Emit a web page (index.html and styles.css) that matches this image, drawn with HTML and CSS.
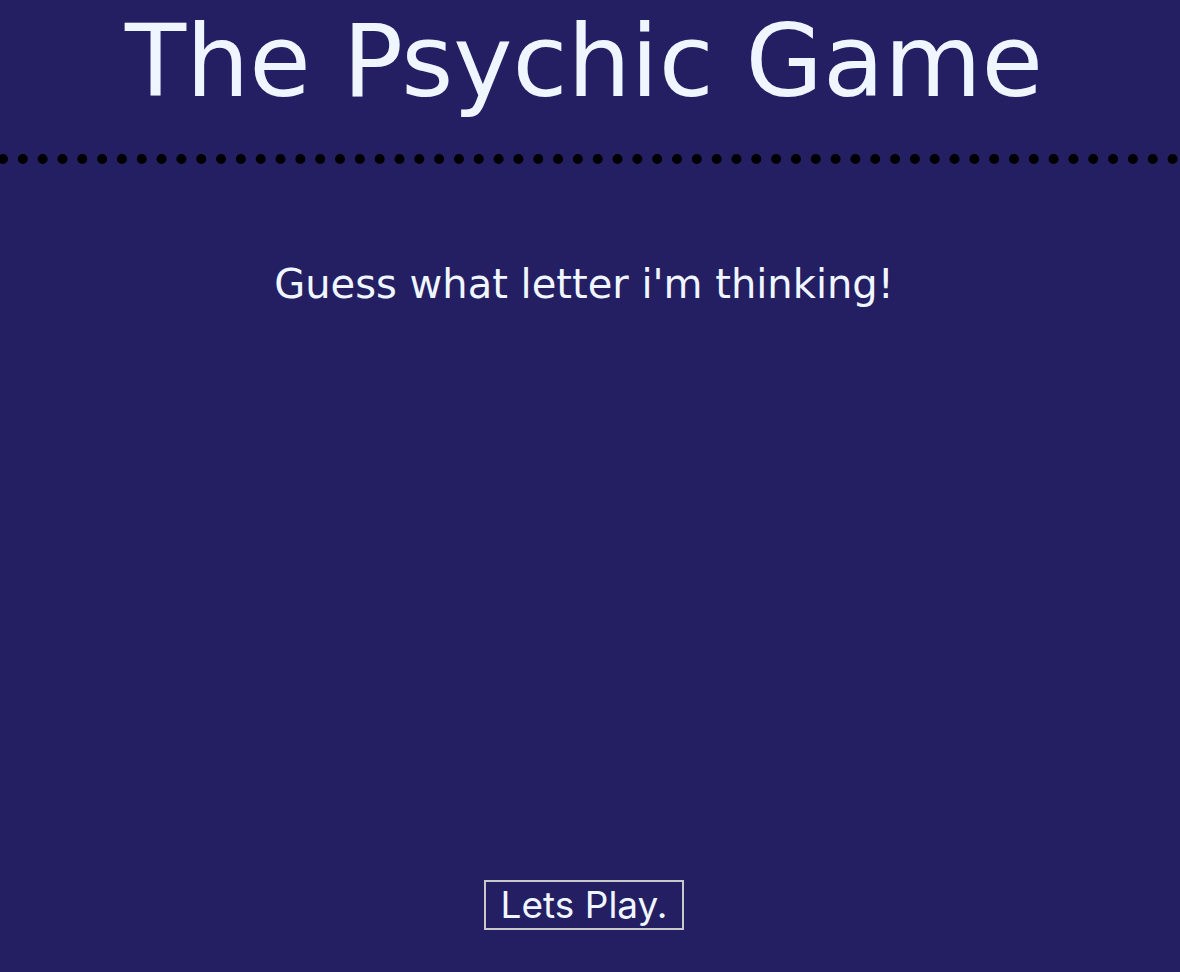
FILE: index.html
```html
<!DOCTYPE html>
<html>
<head>
<meta charset="utf-8">
<link rel="stylesheet" href="styles.css">
<title>The Psychic Game</title>
</head>
<body>
<header class="top">
  <h1 class="title">The Psychic Game</h1>
</header>
<hr class="divider">
<main class="game">
  <p class="prompt">Guess what letter i'm thinking!</p>
  <button class="play">Lets Play.</button>
</main>
</body>
</html>
```
FILE: styles.css
```css
html, body {
  margin: 0;
  padding: 0;
  background: #241f62;
  overflow: hidden;
}
body {
  height: 972px;
  color: #f0f6ff;
  font-family: "DejaVu Sans", sans-serif;
}
.top {
  width: 1168px;
  text-align: center;
}
.title {
  margin: 0;
  padding-top: 12px;
  font-family: "DejaVu Sans", sans-serif;
  font-weight: 400;
  font-size: 100px;
  line-height: 100px;
  letter-spacing: 0;
}
.divider {
  margin: 42px 0 0 -2px;
  width: 1200px;
  height: 0;
  border: 0;
  border-top: 10px dotted #000;
}
.game {
  width: 1168px;
  display: flex;
  flex-direction: column;
  align-items: center;
}
.prompt {
  margin: 98px 0 0;
  font-size: 40px;
  line-height: 44px;
}
.play {
  margin-top: 574px;
  background: transparent;
  color: #f0f6ff;
  border: 2px solid #c8c8c8;
  font-family: "Inter", sans-serif;
  font-size: 37px;
  line-height: 46px;
  padding: 0;
  white-space: nowrap;
  width: 200px;
  height: 50px;
}
```
